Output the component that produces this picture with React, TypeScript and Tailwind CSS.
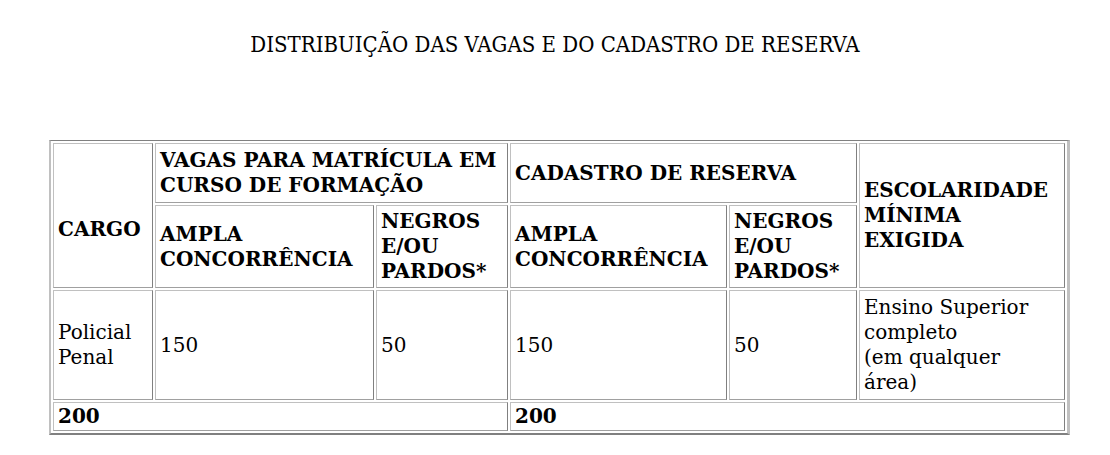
export default function App() {
  const cell =
    "border border-t-[#c0c0c0] border-l-[#c0c0c0] border-r-[#808080] border-b-[#a0a0a0] px-[4px] align-middle text-left";
  const th = `${cell} py-[4px] font-bold`;
  const sub = `${cell} py-[3px] font-bold leading-[25px]`;
  const td = `${cell} py-[4px] font-normal`;
  const total = `${cell} py-[1px] font-bold`;

  return (
    <div className="min-h-screen bg-white pt-[32px] text-black [font-family:'DejaVu_Serif',serif]">
      <p className="text-center text-[22px] leading-[26px] [font-family:'DejaVu_Serif_Condensed','DejaVu_Serif',serif] [font-stretch:condensed]">
        DISTRIBUIÇÃO DAS VAGAS E DO CADASTRO DE RESERVA
      </p>

      <table className="ml-[49px] mt-[82px] w-[1021px] table-fixed border-separate border-spacing-[2px] border-t border-b-2 border-l-2 border-r-[3px] border-t-[#808080] border-b-[#808080] border-l-[#c0c0c0] border-r-[#c0c0c0] text-[20px] leading-[25px]">
        <colgroup>
          <col className="w-[100px]" />
          <col className="w-[219px]" />
          <col className="w-[132px]" />
          <col className="w-[217px]" />
          <col className="w-[128px]" />
          <col className="w-[206px]" />
        </colgroup>
        <tbody>
          <tr>
            <th rowSpan={2} className={`${th} pt-[32px]`}>
              CARGO
            </th>
            <th colSpan={2} className={th}>
              VAGAS PARA MATRÍCULA EM CURSO DE FORMAÇÃO
            </th>
            <th colSpan={2} className={th}>
              CADASTRO DE RESERVA
            </th>
            <th rowSpan={2} className={th}>
              ESCOLARIDADE MÍNIMA EXIGIDA
            </th>
          </tr>
          <tr>
            <th className={sub}>AMPLA CONCORRÊNCIA</th>
            <th className={sub}>NEGROS E/OU PARDOS*</th>
            <th className={sub}>AMPLA CONCORRÊNCIA</th>
            <th className={sub}>NEGROS E/OU PARDOS*</th>
          </tr>
          <tr>
            <td className={td}>Policial Penal</td>
            <td className={td}>150</td>
            <td className={td}>50</td>
            <td className={td}>150</td>
            <td className={td}>50</td>
            <td className={td}>
              Ensino Superior
              <br />
              completo
              <br />
              (em qualquer
              <br />
              área)
            </td>
          </tr>
          <tr>
            <td colSpan={3} className={total}>
              200
            </td>
            <td colSpan={3} className={total}>
              200
            </td>
          </tr>
        </tbody>
      </table>
    </div>
  );
}
